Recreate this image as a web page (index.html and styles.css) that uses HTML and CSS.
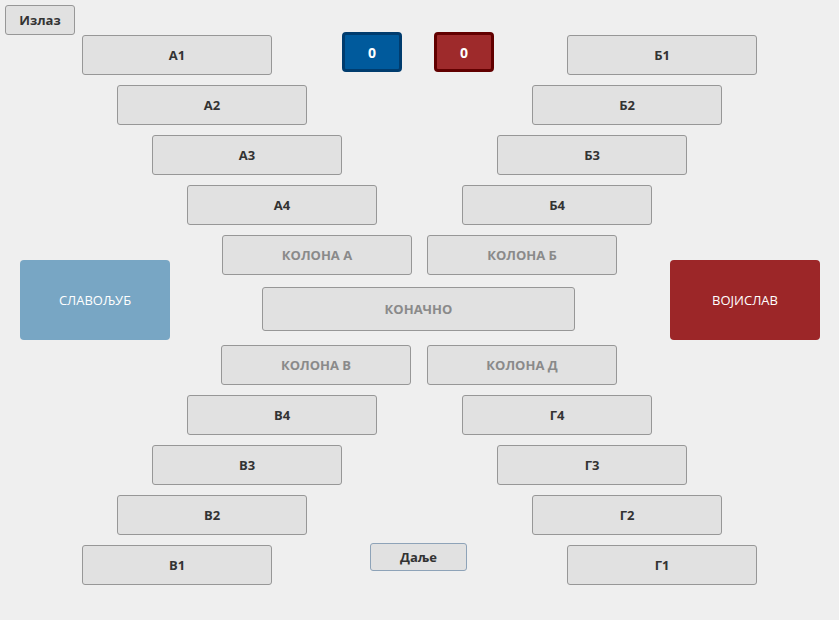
FILE: index.html
```html
<!DOCTYPE html>
<html lang="sr">
<head>
<meta charset="utf-8">
<title>Асоцијације</title>
<link rel="stylesheet" href="styles.css">
</head>
<body>
<div class="page">
  <div class="header"><button class="btn btn-exit">Излаз</button></div>

  <div class="row r1">
    <button class="btn field">А1</button>
    <div class="scores">
      <div class="score score-blue">0</div>
      <div class="score score-red">0</div>
    </div>
    <button class="btn field push">Б1</button>
  </div>
  <div class="row r2"><button class="btn field">А2</button><button class="btn field">Б2</button></div>
  <div class="row r3"><button class="btn field">А3</button><button class="btn field">Б3</button></div>
  <div class="row r4"><button class="btn field">А4</button><button class="btn field">Б4</button></div>

  <div class="middle">
    <div class="player-cell left"><div class="player player-blue">СЛАВОЉУБ</div></div>
    <div class="center">
      <div class="pair"><button class="btn field col">КОЛОНА А</button><button class="btn field col">КОЛОНА Б</button></div>
      <button class="btn col final">КОНАЧНО</button>
      <div class="pair pair-low"><button class="btn field col">КОЛОНА В</button><button class="btn field col">КОЛОНА Д</button></div>
    </div>
    <div class="player-cell right"><div class="player player-red">ВОЈИСЛАВ</div></div>
  </div>

  <div class="row r4"><button class="btn field">В4</button><button class="btn field">Г4</button></div>
  <div class="row r3"><button class="btn field">В3</button><button class="btn field">Г3</button></div>
  <div class="row r2"><button class="btn field">В2</button><button class="btn field">Г2</button></div>
  <div class="row r1">
    <button class="btn field">В1</button>
    <button class="btn btn-next">Даље</button>
    <button class="btn field push">Г1</button>
  </div>
</div>
</body>
</html>
```

FILE: styles.css
```css
* { box-sizing: border-box; }
html, body {
  margin: 0;
  padding: 0;
  background: #efefef;
  width: 839px;
  height: 620px;
  overflow: hidden;
  font-family: "Open Sans", "DejaVu Sans", sans-serif;
}
.page {
  display: flex;
  flex-direction: column;
  gap: 10px;
}
.header {
  height: 35px;
  padding: 5px 0 0 5px;
  margin-bottom: -10px;
}
.btn {
  font-family: "Open Sans", "DejaVu Sans", sans-serif;
  font-weight: 700;
  font-size: 13px;
  color: #333;
  background: #e1e1e1;
  border: 1px solid #979797;
  border-radius: 3px;
  padding: 0;
  margin: 0;
  display: flex;
  align-items: center;
  justify-content: center;
}
.btn-exit {
  width: 70px;
  height: 30px;
  position: relative;
  z-index: 1;
}
.row {
  display: flex;
  align-items: flex-start;
  justify-content: space-between;
  height: 40px;
}
.r1 { padding: 0 82px; }
.r2 { padding: 0 117px; }
.r3 { padding: 0 152px; }
.r4 { padding: 0 187px; }
.field {
  width: 190px;
  height: 40px;
}
.push { margin-left: auto; }
.scores {
  display: flex;
  gap: 32px;
  margin: -3px 0 0 70px;
}
.score {
  width: 60px;
  height: 40px;
  border-radius: 4px;
  border: 3px solid;
  color: #fff;
  font-weight: 700;
  font-size: 14px;
  display: flex;
  align-items: center;
  justify-content: center;
}
.score-blue { background: #005a9c; border-color: #003c6e; }
.score-red { background: #9e2a2b; border-color: #620000; }

.middle {
  display: grid;
  grid-template-columns: 221px 396px 1fr;
  height: 150px;
}
.player-cell { padding-top: 25px; }
.player-cell.left { padding-left: 20px; }
.player-cell.right { padding-left: 53px; }
.player {
  width: 150px;
  height: 80px;
  border-radius: 4px;
  color: #fff;
  font-size: 13px;
  display: flex;
  align-items: center;
  justify-content: center;
}
.player-blue { background: #78a6c4; }
.player-red { background: #9c2628; }
.center {
  display: flex;
  flex-direction: column;
}
.pair {
  display: flex;
  justify-content: space-between;
  padding-left: 1px;
}
.pair-low { padding-left: 0; margin-top: 14px; }
.col { color: #8a8a8a; }
.final {
  width: 313px;
  height: 44px;
  margin: 12px 0 0 41px;
}
.btn-next {
  width: 97px;
  height: 28px;
  margin: -2px 0 0 98px;
  border-color: #8ea3b8;
}
```
